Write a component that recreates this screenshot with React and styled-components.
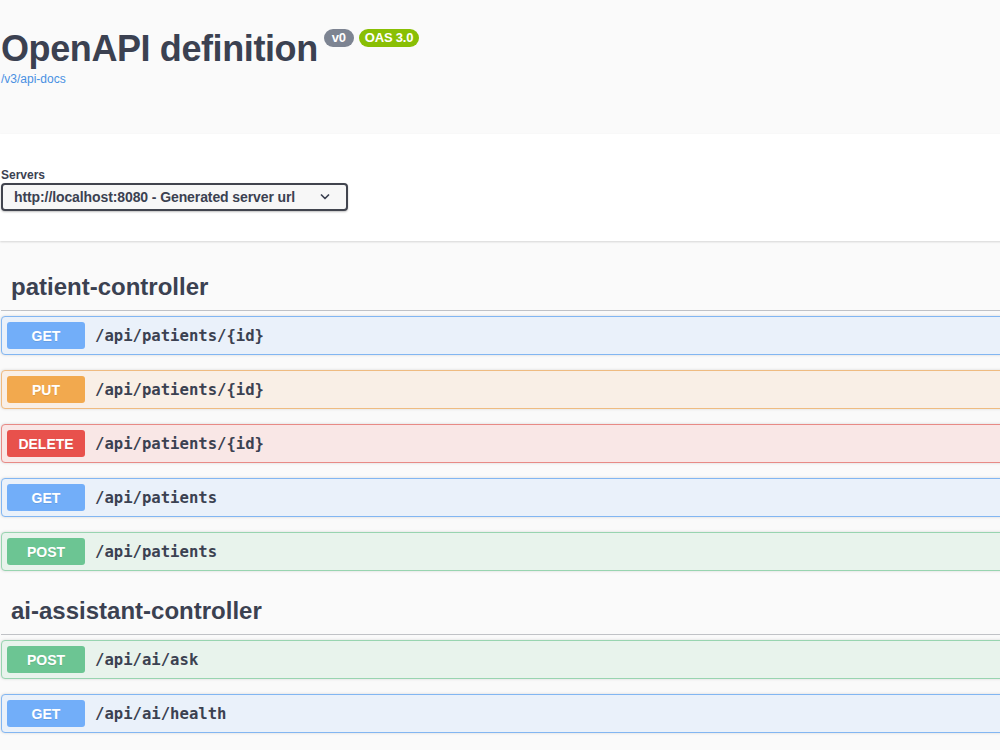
import React from 'react';
import styled, { createGlobalStyle } from 'styled-components';

// Swagger UI style page: info header, server picker, tag sections with operations

const GlobalStyle = createGlobalStyle`
  html, body {
    margin: 0;
    padding: 0;
    background: #fafafa;
    overflow: hidden;
  }
  body {
    font-family: "Liberation Sans", Arial, sans-serif;
    color: #3b4151;
  }
`;

// badge / border / background per method
const METHOD_COLORS = {
  GET: { badge: '#72aef9', border: '#82b6f2', bg: '#eaf1fa' },
  PUT: { badge: '#f2a94e', border: '#efbb81', bg: '#f9efe6' },
  DELETE: { badge: '#e8514c', border: '#e88a86', bg: '#f9e7e6' },
  POST: { badge: '#6cc593', border: '#98d4b0', bg: '#e8f3ec' },
};

const sections = [
  {
    name: 'patient-controller',
    ops: [
      { method: 'GET', path: '/api/patients/{id}' },
      { method: 'PUT', path: '/api/patients/{id}' },
      { method: 'DELETE', path: '/api/patients/{id}' },
      { method: 'GET', path: '/api/patients' },
      { method: 'POST', path: '/api/patients' },
    ],
  },
  {
    name: 'ai-assistant-controller',
    ops: [
      { method: 'POST', path: '/api/ai/ask' },
      { method: 'GET', path: '/api/ai/health' },
    ],
  },
];

const App = () => (
  <Page>
    <GlobalStyle />
    <Info>
      <Title>
        <TitleText>OpenAPI definition</TitleText>
        <Stamp>v0</Stamp>
        <Stamp $green>OAS 3.0</Stamp>
      </Title>
      <DocsLink href="#">/v3/api-docs</DocsLink>
    </Info>

    <SchemeContainer>
      <ServersLabel>Servers</ServersLabel>
      <ServerSelect>
        <span>http://localhost:8080 - Generated server url</span>
        <svg width="10" height="6" viewBox="0 0 10 6">
          <polyline points="1.5,1 5,4.5 8.5,1" fill="none" stroke="#3b4151" strokeWidth="1.7" strokeLinecap="round" strokeLinejoin="round" />
        </svg>
      </ServerSelect>
    </SchemeContainer>

    <Operations>
      {sections.map(section => (
        <TagSection key={section.name}>
          <TagHeading>{section.name}</TagHeading>
          {section.ops.map(op => (
            <OpBlock key={op.method + op.path} $c={METHOD_COLORS[op.method]}>
              <MethodBadge $c={METHOD_COLORS[op.method]}>{op.method}</MethodBadge>
              <OpPath>{op.path}</OpPath>
            </OpBlock>
          ))}
        </TagSection>
      ))}
    </Operations>
  </Page>
);

const Page = styled.div`
  width: 1080px;
  min-height: 750px;
`;

const Info = styled.div`
  padding: 27px 0 0 1px;
  height: 107px;
  background: #fafafa;
`;

const Title = styled.h2`
  display: flex;
  align-items: flex-start;
  margin: 0;
  font-size: 36px;
  line-height: 43px;
  font-weight: 700;
  color: #3b4151;
`;

const TitleText = styled.span`
  letter-spacing: -0.4px;
`;

const Stamp = styled.span`
  display: inline-flex;
  align-items: center;
  height: 18px;
  margin: 2px 0 0 ${({ $green }) => ($green ? '5px' : '6px')};
  padding: 0 ${({ $green }) => ($green ? '6px' : '8px')};
  border-radius: 57px;
  background: ${({ $green }) => ($green ? '#89bf04' : '#7d8492')};
  color: #fff;
  font-size: 13px;
  line-height: 18px;
  font-weight: 700;
  letter-spacing: -0.2px;
`;

const DocsLink = styled.a`
  display: block;
  margin-top: 2px;
  font-size: 12px;
  line-height: 14px;
  color: #4990e2;
  text-decoration: none;
`;

const SchemeContainer = styled.div`
  padding: 33px 0 30px 1px;
  background: #fff;
  box-shadow: 0 1px 2px 0 rgba(0, 0, 0, 0.15);
`;

const ServersLabel = styled.div`
  font-size: 12px;
  line-height: 16px;
  font-weight: 700;
`;

const ServerSelect = styled.div`
  display: flex;
  align-items: center;
  justify-content: space-between;
  box-sizing: border-box;
  width: 347px;
  height: 28px;
  padding: 0 16px 0 11px;
  border: 2px solid #41444e;
  border-radius: 4px;
  background: #f7f7f7;
  box-shadow: 0 1px 2px 0 rgba(0, 0, 0, 0.25);
  font-size: 14px;
  font-weight: 700;
  letter-spacing: -0.1px;
  color: #3b4151;
`;

const Operations = styled.div`
  padding: 22px 0 0 1px;
`;

const TagSection = styled.section`
  display: flex;
  flex-direction: column;
  margin-bottom: 1px;
`;

const TagHeading = styled.h3`
  margin: 0 0 5px;
  padding: 10px 20px 10px 10px;
  font-size: 24px;
  line-height: 27px;
  font-weight: 700;
  color: #3b4151;
  border-bottom: 1px solid rgba(59, 65, 81, 0.3);
`;

const OpBlock = styled.div`
  display: flex;
  align-items: center;
  margin: 0 0 15px;
  padding: 5px;
  border: 1px solid ${({ $c }) => $c.border};
  border-radius: 4px;
  background: ${({ $c }) => $c.bg};
  box-shadow: 0 0 3px rgba(0, 0, 0, 0.15);
`;

const MethodBadge = styled.div`
  width: 78px;
  height: 27px;
  display: flex;
  align-items: center;
  justify-content: center;
  border-radius: 3px;
  background: ${({ $c }) => $c.badge};
  color: #fff;
  font-size: 14px;
  font-weight: 700;
  text-shadow: 0 1px 0 rgba(0, 0, 0, 0.1);
`;

const OpPath = styled.span`
  padding: 0 10px;
  font-family: "DejaVu Sans Mono", "Liberation Mono", monospace;
  font-size: 15.6px;
  font-weight: 700;
  color: #3b4151;
`;

export default App;
